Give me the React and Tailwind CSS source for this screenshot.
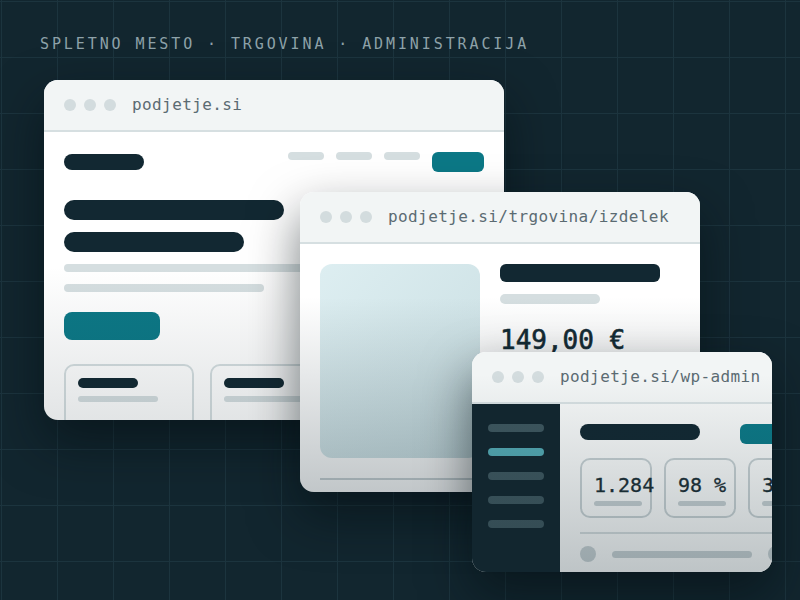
const mono = { fontFamily: '"DejaVu Sans Mono", "Liberation Mono", monospace' };

const Window = ({ className, url, shade, children }) => (
  <div
    className={`absolute flex flex-col overflow-hidden rounded-[14px] bg-white shadow-[0_22px_50px_rgba(3,12,16,0.55)] ${className}`}
  >
    <div className="flex h-[52px] shrink-0 items-center border-b-2 border-[#d6dfe1] bg-[#f2f5f5] px-5">
      <div className="flex gap-2">
        <span className="h-3 w-3 rounded-full bg-[#d3dcde]" />
        <span className="h-3 w-3 rounded-full bg-[#d3dcde]" />
        <span className="h-3 w-3 rounded-full bg-[#d3dcde]" />
      </div>
      <span className="ml-4 whitespace-nowrap text-[16px] tracking-[0.4px] text-[#5b6b72]" style={mono}>
        {url}
      </span>
    </div>
    <div className="relative flex-1">{children}</div>
    {/* bottom fade */}
    <div className={`pointer-events-none absolute inset-0 bg-linear-to-b from-transparent ${shade}`} />
  </div>
);

const Pill = ({ className }) => <div className={`rounded-full ${className}`} />;

export default function App() {
  return (
    <div
      className="relative h-[600px] w-[800px] overflow-hidden bg-[#12262f] bg-[linear-gradient(to_right,#1c343e_1px,transparent_1px),linear-gradient(to_bottom,#1c343e_1px,transparent_1px)] bg-size-[56px_56px] bg-position-[1px_1px]"
    >
      <div
        className="pl-10 pt-[36px] text-[15px] uppercase leading-[16px] tracking-[2.9px] text-[#8ea2a9]"
        style={mono}
      >
        Spletno mesto · Trgovina · Administracija
      </div>

      {/* spletno mesto */}
      <Window className="left-[44px] top-[80px] h-[340px] w-[460px]" url="podjetje.si" shade="from-55% to-[rgba(18,38,47,0.12)]">
        <div className="flex flex-col px-5 pt-5">
          <div className="flex items-start justify-between">
            <Pill className="mt-0.5 h-4 w-20 bg-[#122832]" />
            <div className="flex items-start gap-3">
              <Pill className="h-2 w-9 bg-[#d5dee0]" />
              <Pill className="h-2 w-9 bg-[#d5dee0]" />
              <Pill className="h-2 w-9 bg-[#d5dee0]" />
              <div className="h-5 w-[52px] rounded-md bg-[#0c7886]" />
            </div>
          </div>
          <Pill className="mt-7 h-5 w-[220px] bg-[#122832]" />
          <Pill className="mt-3 h-5 w-[180px] bg-[#122832]" />
          <Pill className="mt-3 h-2 w-[280px] bg-[#d5dee0]" />
          <Pill className="mt-3 h-2 w-[200px] bg-[#d5dee0]" />
          <div className="mt-5 h-7 w-24 rounded-lg bg-[#0c7886]" />
          <div className="mt-6 flex gap-4">
            {[0, 1, 2].map((i) => (
              <div key={i} className="h-[80px] w-[130px] shrink-0 rounded-[10px] border-2 border-[#d5dee0] px-3 pt-3">
                <Pill className="h-2.5 w-[60px] bg-[#122832]" />
                <Pill className="mt-2 h-1.5 w-20 bg-[#d5dee0]" />
              </div>
            ))}
          </div>
        </div>
      </Window>

      {/* trgovina */}
      <Window className="left-[300px] top-[192px] h-[300px] w-[400px]" url="podjetje.si/trgovina/izdelek" shade="from-35% to-[rgba(18,38,47,0.26)]">
        <div className="flex flex-col px-5 pt-5">
          <div className="flex gap-5">
            <div className="h-[194px] w-40 rounded-xl bg-linear-to-br from-[#ddeef1] to-[#c9dee2]" />
            <div className="flex flex-col">
              <div className="h-[18px] w-40 rounded-md bg-[#122832]" />
              <Pill className="mt-3 h-2.5 w-[100px] bg-[#d5dee0]" />
              <div
                className="mt-[21px] text-[26px] leading-[30px] text-[#132a33] [-webkit-text-stroke:0.6px_#132a33]"
                style={mono}
              >
                149,00 €
              </div>
            </div>
          </div>
          <div className="mt-5 h-0.5 w-full bg-[#c9d2d5]" />
        </div>
      </Window>

      {/* administracija */}
      <Window className="left-[472px] top-[352px] h-[220px] w-[300px]" url="podjetje.si/wp-admin" shade="from-10% to-[rgba(18,38,47,0.24)]">
        <div className="flex h-full">
          <div className="flex w-[88px] shrink-0 flex-col gap-4 bg-[#12262f] px-4 pt-5">
            <Pill className="h-2 w-14 bg-[#3d565e]" />
            <Pill className="h-2 w-14 bg-[#52a7b1]" />
            <Pill className="h-2 w-14 bg-[#3d565e]" />
            <Pill className="h-2 w-14 bg-[#3d565e]" />
            <Pill className="h-2 w-14 bg-[#3d565e]" />
          </div>
          <div className="flex flex-1 flex-col bg-[#f4f6f6] pl-5 pt-5">
            <div className="flex items-start gap-10">
              <Pill className="h-4 w-[120px] shrink-0 bg-[#122832]" />
              <div className="h-5 w-16 shrink-0 rounded-md bg-[#0c7886]" />
            </div>
            <div className="mt-3.5 flex gap-3">
              {["1.284", "98 %", "312"].map((v) => (
                <div key={v} className="h-[60px] w-[72px] shrink-0 rounded-[10px] border-2 border-[#c3cdd0] pl-3 pt-[14px]">
                  <div
                    className="whitespace-nowrap text-[20px] leading-[22px] text-[#1a2e35] [-webkit-text-stroke:0.3px_#1a2e35]"
                    style={mono}
                  >
                    {v}
                  </div>
                  <Pill className="mt-[5px] h-[5px] w-12 bg-[#c3cdd0]" />
                </div>
              ))}
            </div>
            <div className="mt-3.5 h-0.5 w-full bg-[#d0d8da]" />
            <div className="mt-3 flex items-center gap-4">
              <div className="h-4 w-4 shrink-0 rounded-full bg-[#c3cdd0]" />
              <Pill className="h-[7px] w-[140px] shrink-0 bg-[#c3cdd0]" />
              <div className="h-4 w-4 shrink-0 rounded-full bg-[#c3cdd0]" />
            </div>
          </div>
        </div>
      </Window>
    </div>
  );
}
